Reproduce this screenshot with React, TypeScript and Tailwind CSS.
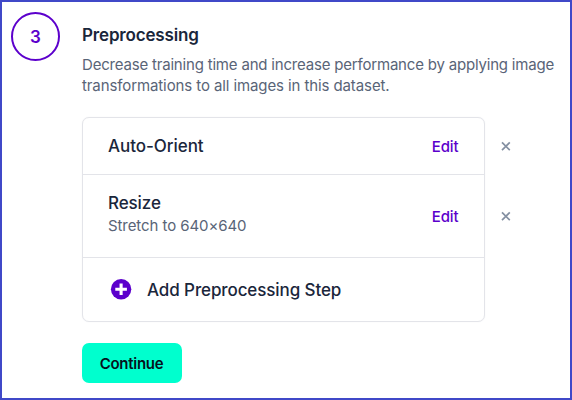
function RemoveButton() {
  return (
    <button aria-label="Remove step" className="flex h-4 w-4 items-center justify-center text-[#8490a2]">
      <svg width="10" height="10" viewBox="0 0 10 10" fill="none" stroke="currentColor" strokeWidth="1.7">
        <path d="M1 1.4L8.8 9.2M8.8 1.4L1 9.2" />
      </svg>
    </button>
  );
}

function EditButton() {
  return <button className="pt-px text-[15px] leading-5 font-medium tracking-[-0.1px] text-[#5c00cc]">Edit</button>;
}

export default function App() {
  return (
    <main className="flex h-[400px] w-[572px] items-start overflow-hidden border-2 border-[#4048c8] bg-white pt-[10px] pl-[9px] font-['Inter','Liberation_Sans',sans-serif] text-[#1a263b]">
      <div className="flex h-[49px] w-[49px] shrink-0 items-center justify-center rounded-full border-2 border-[#5c00cc] text-[17px] font-semibold text-[#5c00cc]">
        <span className="pt-[2px]">3</span>
      </div>
      <section className="ml-[22px] pt-[12px]">
        <h2 className="text-[17px] leading-[22px] font-semibold tracking-[-0.17px]">Preprocessing</h2>
        <p className="mt-[8px] text-[15px] leading-[21px] whitespace-nowrap text-[#596477]">
          <span className="tracking-[-0.19px]">Decrease training time and increase performance by applying image</span>
          <br />
          <span className="tracking-[-0.1px]">transformations to all images in this dataset.</span>
        </p>
        <div className="mt-[21px] flex gap-[13px]">
          <div className="w-[403px] rounded-[7px] border border-[#e3e4e9] shadow-[0_0_1px_#e3e4e9]">
            <div className="flex h-[57px] items-center justify-between border-b border-[#e3e4e9] pr-[25.5px] pl-[25px]">
              <h3 className="text-[17px] leading-6 font-medium tracking-[-0.05px]">Auto-Orient</h3>
              <EditButton />
            </div>
            <div className="flex h-[83px] items-center justify-between border-b border-[#e3e4e9] pr-[25.5px] pl-[25px]">
              <div className="pb-[6px]">
                <h3 className="text-[17px] leading-6 font-medium tracking-[-0.1px]">Resize</h3>
                <p className="text-[15px] leading-[21px] tracking-[-0.08px] text-[#596477]">Stretch to 640×640</p>
              </div>
              <EditButton />
            </div>
            <button className="flex h-[63px] items-center gap-[16px] pl-[27px]">
              <svg width="22" height="21" viewBox="0 0 22 21" className="-mr-px">
                <circle cx="11.1" cy="10.3" r="10.2" fill="#5c00cc" />
                <path d="M11.1 4.5v11.6M5.3 10.3h11.6" stroke="white" strokeWidth="3.1" />
              </svg>
              <span className="text-[17px] leading-6 font-medium tracking-[-0.1px]">Add Preprocessing Step</span>
            </button>
          </div>
          <div className="flex flex-col gap-[54px] pt-[21px]">
            <RemoveButton />
            <RemoveButton />
          </div>
        </div>
        <button className="mt-[21px] flex h-10 w-[100px] items-center justify-center rounded-[7px] bg-[#00ffce] pt-[2px] pr-px text-[15px] font-semibold tracking-[-0.28px] text-[#06121c]">
          Continue
        </button>
      </section>
    </main>
  );
}
